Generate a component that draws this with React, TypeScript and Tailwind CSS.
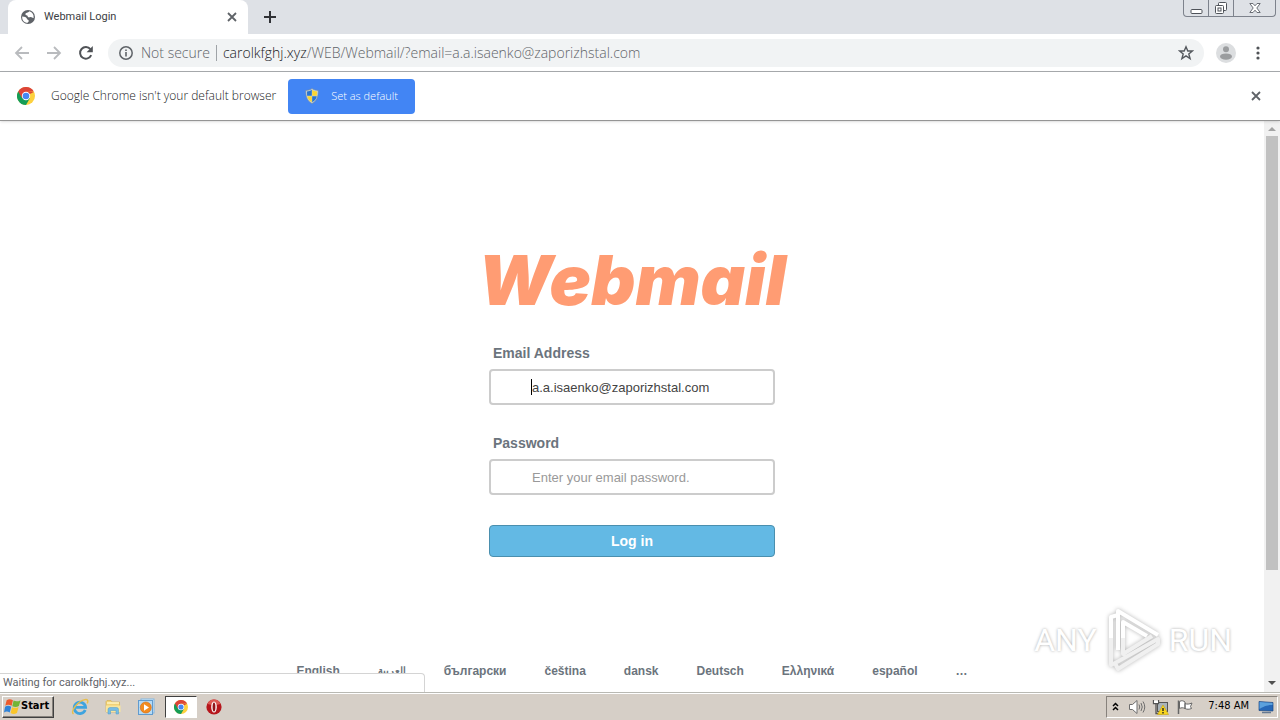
import type { ReactNode } from "react";

const languages = ["English", "العربية", "български", "čeština", "dansk", "Deutsch", "Ελληνικά", "español", "…"];

function ChromeIcon({ className }: { className?: string }) {
    return (
        <svg viewBox="0 0 24 24" className={className} aria-hidden="true">
            <circle cx="12" cy="12" r="12" fill="#fdd13e" />
            <path d="M12 12 L1.6 6 A12 12 0 0 0 12 24 L17.2 15Z" fill="#159d57" />
            <path d="M1.6 6 A12 12 0 0 1 22.4 6 L12 6.5 L6.8 15Z" fill="#dc4437" />
            <path d="M22.4 6.5H12V12Z" fill="#dc4437" />
            <circle cx="12" cy="12" r="5.6" fill="#fff" />
            <circle cx="12" cy="12" r="4.4" fill="#4587f3" />
        </svg>
    );
}

function GlobeIcon() {
    return (
        <svg viewBox="0 0 16 16" className="size-4" aria-hidden="true">
            <circle cx="8" cy="8" r="7" fill="#5f6368" />
            <path d="M9.5 2.2 C8 4 5.5 3.3 5.4 5.3 C5.4 6.6 7.4 6 7.8 7.4 C8 8.6 9.6 8.3 10.5 8 C12 7.8 12.4 9.3 13.6 8.9 C14 5.6 12.4 3 9.5 2.2Z" fill="#fff" />
            <path d="M2.2 7.4 C4 7.3 6.6 8 6.8 9.4 C6.9 10.7 8.9 10.5 8.8 12 C8.7 13 7.8 13.2 7.6 13.8 C4 13.6 1.9 10.8 2.2 7.4Z" fill="#fff" />
        </svg>
    );
}

function ShieldIcon() {
    return (
        <svg viewBox="0 0 16 16" className="size-4" aria-hidden="true">
            <path d="M8 0.5 C6 2 4 2.4 1.8 2.4 C1.6 8.8 3.4 13 8 15.5 C12.6 13 14.4 8.8 14.2 2.4 C12 2.4 10 2 8 0.5Z" fill="#c9d6dc" stroke="#7c8994" strokeWidth="0.6" />
            <path d="M7.8 1.8 C6.2 3 4.8 3.3 3 3.4 L3.1 7.8H7.8Z" fill="#2a74cf" />
            <path d="M8.2 1.8 C9.8 3 11.2 3.3 13 3.4 L12.9 7.8H8.2Z" fill="#fbd531" />
            <path d="M3.2 8.2H7.8V14.2 C5 12.6 3.7 10.8 3.2 8.2Z" fill="#fbd531" />
            <path d="M12.8 8.2H8.2V14.2 C11 12.6 12.3 10.8 12.8 8.2Z" fill="#2a74cf" />
        </svg>
    );
}

function CloseIcon({ className }: { className?: string }) {
    return (
        <svg viewBox="0 0 10 10" className={className} fill="none" stroke="#5f6368" strokeWidth="1.8" aria-hidden="true">
            <path d="M1 1 9 9M9 1 1 9" />
        </svg>
    );
}

function TabStrip() {
    return (
        <header className="flex h-[34px] items-start bg-[#dee1e6] pl-2">
            <div className="flex h-full w-60 items-center rounded-t-lg bg-white pr-2.5 pl-3">
                <GlobeIcon />
                <span className="ml-2 flex-1 font-['Roboto',sans-serif] text-[11px] text-[#3c4043]">Webmail Login</span>
                <button aria-label="Close tab" className="flex size-3 items-center justify-center">
                    <CloseIcon className="size-2.5" />
                </button>
            </div>
            <button aria-label="New tab" className="ml-4 mt-[11px]">
                <svg viewBox="0 0 12 12" className="size-3" stroke="#303236" strokeWidth="2" aria-hidden="true">
                    <path d="M6 0V12M0 6H12" />
                </svg>
            </button>
            <div className="mr-1 ml-auto flex h-[17px] divide-x divide-[#7d828c] rounded-b border border-t-0 border-[#7d828c]">
                <button aria-label="Minimize" className="flex w-[25px] items-center justify-center">
                    <svg viewBox="0 0 13 13" className="size-[13px]" aria-hidden="true">
                        <rect x="1" y="7.5" width="11" height="4" rx="1" fill="#fff" stroke="#4f535a" />
                    </svg>
                </button>
                <button aria-label="Restore" className="flex w-[25px] items-center justify-center">
                    <svg viewBox="0 0 14 14" className="size-3.5" fill="#fff" stroke="#4f535a" aria-hidden="true">
                        <rect x="4.5" y="1.5" width="8" height="8" rx="1" />
                        <rect x="1.5" y="4.5" width="8" height="8" rx="1" />
                        <rect x="4" y="7" width="3" height="3" />
                    </svg>
                </button>
                <button aria-label="Close" className="flex w-[41px] items-center justify-center">
                    <svg viewBox="0 0 12 12" className="size-3" aria-hidden="true">
                        <path d="M0.8 1.5H4L6 3.8 8 1.5H11.2L7.8 6 11.2 10.5H8L6 8.2 4 10.5H0.8L4.2 6Z" fill="#fff" stroke="#6a6e75" />
                    </svg>
                </button>
            </div>
        </header>
    );
}

function Toolbar() {
    return (
        <nav className="flex h-[38px] items-center border-b border-[#a8abae] bg-white pr-3.5 pl-3.5">
            <button aria-label="Back" className="size-4">
                <svg viewBox="0 0 16 16" fill="none" stroke="#b9bbbe" strokeWidth="1.8" aria-hidden="true">
                    <path d="M15 8H2M8 2 2 8 8 14" />
                </svg>
            </button>
            <button aria-label="Forward" className="ml-4 size-4">
                <svg viewBox="0 0 16 16" fill="none" stroke="#b9bbbe" strokeWidth="1.8" aria-hidden="true">
                    <path d="M1 8H14M8 2 14 8 8 14" />
                </svg>
            </button>
            <button aria-label="Reload" className="ml-4 size-4">
                <svg viewBox="0 0 16 16" aria-hidden="true">
                    <path d="M13.2 10.2A5.8 5.8 0 1 1 12.4 4.2" fill="none" stroke="#505357" strokeWidth="2" />
                    <path d="M14.8 1V7.2H8.6Z" fill="#505357" />
                </svg>
            </button>
            <div className="ml-3.5 flex h-7 flex-1 items-center rounded-full bg-[#f1f3f4] pr-2.5 pl-2.5">
                <svg viewBox="0 0 16 16" className="size-4" aria-hidden="true">
                    <circle cx="8" cy="8" r="6.2" fill="none" stroke="#5f6368" strokeWidth="1.5" />
                    <path d="M8 7V11.4M8 4.4V6" stroke="#5f6368" strokeWidth="1.6" />
                </svg>
                <p className="ml-[7px] flex flex-1 items-center font-['Open_Sans',sans-serif] text-sm font-light whitespace-nowrap text-[#5f6368]">
                    <span>Not secure</span>
                    <span className="mx-1.5 h-4 w-px bg-[#9fa3a7]" />
                    <span className="text-[#202124]">carolkfghj.xyz</span>
                    <span>/WEB/Webmail/?email=a.a.isaenko@zaporizhstal.com</span>
                </p>
                <button aria-label="Bookmark this page" className="size-4">
                    <svg viewBox="0 0 16 16" fill="none" stroke="#55595e" strokeWidth="1.4" aria-hidden="true">
                        <path d="M8 1.8 9.8 6H14.4L10.8 8.9 12.1 13.6 8 10.9 3.9 13.6 5.2 8.9 1.6 6H6.2Z" />
                    </svg>
                </button>
            </div>
            <button aria-label="Profile" className="ml-3 size-5">
                <svg viewBox="0 0 20 20" aria-hidden="true">
                    <circle cx="10" cy="10" r="10" fill="#dcdee0" />
                    <circle cx="10" cy="6.2" r="3" fill="#9b9d9f" />
                    <ellipse cx="10" cy="13.6" rx="6" ry="3.2" fill="#9b9d9f" />
                </svg>
            </button>
            <button aria-label="Menu" className="ml-3.5 size-4">
                <svg viewBox="0 0 16 16" fill="#505357" aria-hidden="true">
                    <circle cx="8" cy="3" r="1.6" />
                    <circle cx="8" cy="8" r="1.6" />
                    <circle cx="8" cy="13" r="1.6" />
                </svg>
            </button>
        </nav>
    );
}

function InfoBar() {
    return (
        <div className="relative z-10 flex h-[49px] items-center border-b border-[#959595] bg-white pr-[19px] pl-[17px] font-['Open_Sans',sans-serif] shadow">
            <ChromeIcon className="size-[18px]" />
            <span className="ml-4 text-xs font-light text-[#202124]">Google Chrome isn't your default browser</span>
            <button className="ml-3 flex h-[35px] w-[127px] items-center rounded bg-[#4285f4] pl-4 text-[11px] font-light text-white">
                <ShieldIcon />
                <span className="ml-[11px]">Set as default</span>
            </button>
            <button aria-label="Dismiss" className="ml-auto">
                <CloseIcon className="size-2.5" />
            </button>
        </div>
    );
}

function LoginForm() {
    return (
        <form className="flex w-[286px] flex-col font-['Liberation_Sans',sans-serif]" onSubmit={(e) => e.preventDefault()}>
            <label htmlFor="email" className="mb-1.5 pl-1 text-sm leading-5 font-bold text-[#6b747d]">Email Address</label>
            <div className="relative">
                <input
                    id="email"
                    type="text"
                    defaultValue="a.a.isaenko@zaporizhstal.com"
                    className="h-9 w-full rounded border-2 border-[#cccccc] bg-white pl-[41px] text-[13px] text-[#444444] outline-none"
                />
                {/* Text cursor */}
                <span className="absolute top-2.5 left-[42px] h-4 w-px bg-black" />
            </div>
            <label htmlFor="password" className="mt-7 mb-1.5 pl-1 text-sm leading-5 font-bold text-[#6b747d]">Password</label>
            <input
                id="password"
                type="password"
                placeholder="Enter your email password."
                className="h-9 rounded border-2 border-[#cccccc] bg-white pl-[41px] text-[13px] outline-none placeholder:text-[#999999]"
            />
            <button type="submit" className="mt-[30px] h-8 rounded border border-[#4a8fae] bg-[#63b9e4] text-sm font-bold text-white">
                Log in
            </button>
        </form>
    );
}

function Watermark() {
    return (
        <div className="flex items-center gap-2 font-['Roboto',sans-serif] text-[32px] leading-none text-white [text-shadow:0_0_3px_#a8a8a8]">
            <span>ANY</span>
            <svg viewBox="0 0 56 64" className="h-16 w-14 drop-shadow-[0_0_2px_#b5b5b5]" fill="none" strokeWidth="4" strokeLinejoin="round" aria-hidden="true">
                <path d="M13 42V3L53 27" stroke="#fff" />
                <path d="M6 30V9L13 7M18 30V14L42 28" stroke="#fff" />
                <path d="M6 30V57L12 54M18 30V46L47 28M12 54 53 31V36L13 61 10 55" stroke="#f0f0f0" />
            </svg>
            <span>RUN</span>
        </div>
    );
}

function Scrollbar() {
    return (
        <div className="flex w-4 flex-col items-center bg-[#f1f1f1]" aria-hidden="true">
            <svg viewBox="0 0 16 15" className="h-[15px] w-4"><path d="M4 10 8 6 12 10Z" fill="#a3a3a3" /></svg>
            <div className="h-[76%] w-3 bg-[#c1c1c1]" />
            <svg viewBox="0 0 16 16" className="mt-auto size-4"><path d="M4 5H12L8 9Z" fill="#505050" /></svg>
        </div>
    );
}

function TaskButton({ label, active, children }: { label: string; active?: boolean; children: ReactNode }) {
    return (
        <button
            aria-label={label}
            className={
                active
                    ? "flex h-[22px] w-8 items-center justify-center border border-t-[#404040] border-r-white border-b-white border-l-[#404040] bg-white"
                    : "flex h-[22px] w-8 items-center justify-center"
            }
        >
            {children}
        </button>
    );
}

function Taskbar() {
    return (
        <footer className="flex h-7 items-center border-t border-[#b9b9b3] bg-[#d6cfc7] pr-0.5 pl-0.5 font-['DejaVu_Sans_Condensed','DejaVu_Sans',sans-serif] text-[11px] text-black shadow-[inset_0_1px_0_#fff]">
            <button className="mr-2.5 flex h-[22px] w-[52px] items-center border border-t-white border-r-[#404040] border-b-[#404040] border-l-white pl-px font-bold shadow-[inset_-1px_-1px_0_#87827c]">
                <svg viewBox="0 0 16 16" className="size-[17px] shrink-0" aria-hidden="true">
                    <path d="M2.5 2 C4.5 0.6 6.4 1 8.4 2 L7.2 7.4 C5 6.2 3.2 6 1.2 7.4Z" fill="#ed5b2d" />
                    <path d="M9 2.4 C11 3.4 13.2 3.4 15.6 2 L14 7.6 C11.8 8.8 9.8 8.6 7.8 7.8Z" fill="#72b536" />
                    <path d="M1 8.2 C3 7 4.8 7.2 6.8 8.2 L5.4 13.6 C3.5 12.4 1.8 12.4 0 13.6Z" fill="#3083d8" />
                    <path d="M7.6 8.6 C9.4 9.4 11.6 9.6 13.7 8.4 L12.2 14 C10 15.4 8 15.2 6.2 14.2Z" fill="#fac52a" />
                </svg>
                Start
            </button>
            <div className="flex gap-px">
                <TaskButton label="Internet Explorer">
                    <svg viewBox="0 0 18 18" className="size-[18px]" fill="none" aria-hidden="true">
                        <path d="M14.2 12 A5.7 5.7 0 1 1 14.6 9.4H4" stroke="#3fa4df" strokeWidth="2.8" />
                        <path d="M2.5 16 C-1 13 7 3 14 1.6 C17 1.2 17.4 3 16.2 5.4" stroke="#e8be4a" strokeWidth="1.4" />
                    </svg>
                </TaskButton>
                <TaskButton label="Windows Explorer">
                    <svg viewBox="0 0 18 18" className="size-[18px]" aria-hidden="true">
                        <path d="M2 3.5 3 2.5H7L8 4H15.5V14H2Z" fill="#f1d277" stroke="#d0ac4c" strokeWidth="0.6" />
                        <path d="M3 5H15" stroke="#fff4c0" strokeWidth="1.5" />
                        <path d="M2 7.5H16.5V14H2Z" fill="#f9e59c" />
                        <path d="M4 16V11.5Q4 9.5 6 9.5H12.5Q14.5 9.5 14.5 11.5V16H12V12.5H6.5V16Z" fill="#76bce4" stroke="#4e9dca" strokeWidth="0.5" />
                    </svg>
                </TaskButton>
                <TaskButton label="Media Player">
                    <svg viewBox="0 0 18 18" className="size-[18px]" aria-hidden="true">
                        <rect x="4" y="1" width="13" height="14" fill="#d9ecfa" stroke="#82b5de" />
                        <rect x="1.5" y="2.5" width="14" height="14" fill="#b6daf3" stroke="#619bcf" />
                        <circle cx="8.8" cy="9.5" r="5.5" fill="#f28b20" stroke="#d66c10" strokeWidth="0.6" />
                        <path d="M7 6.3V12.7L12 9.5Z" fill="#fff" />
                    </svg>
                </TaskButton>
                <div className="ml-0.5">
                    <TaskButton label="Google Chrome" active>
                        <ChromeIcon className="size-3.5" />
                    </TaskButton>
                </div>
                <TaskButton label="Opera">
                    <svg viewBox="0 0 16 16" className="size-4" aria-hidden="true">
                        <circle cx="8" cy="8" r="7.6" fill="#b6161c" />
                        <path d="M1.5 5 A7 7 0 0 1 14.5 5 Q8 7 1.5 5Z" fill="#dd5954" />
                        <ellipse cx="8" cy="8" rx="2.8" ry="5.6" fill="#fff" />
                        <ellipse cx="8" cy="8" rx="1.4" ry="4.6" fill="#91151a" />
                    </svg>
                </TaskButton>
            </div>
            <div className="ml-auto flex h-[22px] items-center border border-t-[#87827c] border-r-white border-b-white border-l-[#87827c] pr-0.5 pl-1">
                <svg viewBox="0 0 9 12" className="h-3 w-[9px]" fill="none" stroke="#000" strokeWidth="1.5" aria-hidden="true">
                    <path d="M2 5 4.5 2.5 7 5M2 9 4.5 6.5 7 9" />
                </svg>
                <svg viewBox="0 0 18 16" className="ml-2 h-4 w-[18px]" fill="none" stroke="#6e6e6e" aria-hidden="true">
                    <path d="M1.5 5.5H4.5L9 1.5V14.5L4.5 10.5H1.5Z" fill="#fff" />
                    <path d="M11 5.5Q12.5 8 11 10.5M13 4Q15.5 8 13 12M15 2.5Q18.5 8 15 13.5" />
                </svg>
                <svg viewBox="0 0 18 18" className="ml-1.5 size-[18px]" aria-hidden="true">
                    <rect x="5.5" y="4.5" width="10" height="9" fill="#aab4ba" stroke="#555" />
                    <path d="M1.5 2V5.5H6.5V2M4 5.5V15.5H10" fill="none" stroke="#555" strokeWidth="1.3" />
                    <path d="M2 2.5H6V5H2Z" fill="#fff" />
                    <path d="M11 7 16.5 16.5H5.5Z" fill="#f8d51c" stroke="#c9a40a" strokeWidth="0.6" />
                    <path d="M11 10V13M11 14V15.5" stroke="#222" strokeWidth="1.4" />
                </svg>
                <svg viewBox="0 0 18 16" className="ml-1.5 h-4 w-[18px]" fill="#fff" stroke="#666" aria-hidden="true">
                    <path d="M3.5 2.5C6 1 7.5 2 9 3 V9.5C7 8.5 5.5 8.5 3.5 9.5ZM9 4.5C11 5.5 13 5.2 16 4 L14.5 7.5 15.5 9.5C13 10.5 11 10.5 9 9.5Z" />
                    <path d="M2.5 1.5V15" strokeWidth="1.5" />
                </svg>
                <time className="ml-3.5">7:48 AM</time>
                <svg viewBox="0 0 18 16" className="ml-2 h-4 w-[18px]" aria-hidden="true">
                    <path d="M2 2.5 16 3.5V12L2 11.5Z" fill="#2668b8" stroke="#1e4983" strokeWidth="0.7" />
                    <path d="M2.5 3 15.5 4V6C9 6 6 8 2.5 10Z" fill="#5ba1dd" />
                    <path d="M5 13.5H14" stroke="#667991" strokeWidth="1.5" />
                </svg>
            </div>
        </footer>
    );
}

export default function App() {
    return (
        <div className="flex min-h-screen flex-col bg-white">
            <TabStrip />
            <Toolbar />
            <InfoBar />
            <div className="relative flex flex-1">
                <main className="flex flex-1 flex-col items-center pt-[121px]">
                    <h1 className="mb-6 font-['Inter',sans-serif] text-[69px] leading-[77px] font-black text-[#ff9c73] italic">Webmail</h1>
                    <LoginForm />
                    <ul className="mt-auto mb-[11px] flex gap-[38px] font-['Liberation_Sans',sans-serif] text-xs leading-5 font-bold text-[#6b747d]">
                        {languages.map((language) => (
                            <li key={language} className={language === "العربية" ? "text-[10px] leading-5" : ""}>
                                <a href="#">{language}</a>
                            </li>
                        ))}
                    </ul>
                </main>
                <Scrollbar />
                <div className="absolute bottom-0 left-0 h-[19px] w-[425px] rounded-tr border-t border-r border-[#d4d4d4] bg-white pl-[3px] font-['Roboto',sans-serif] text-[11px] leading-[18px] text-[#5f6368]">
                    Waiting for carolkfghj.xyz...
                </div>
                <div className="absolute right-12 bottom-5">
                    <Watermark />
                </div>
            </div>
            <Taskbar />
        </div>
    );
}
